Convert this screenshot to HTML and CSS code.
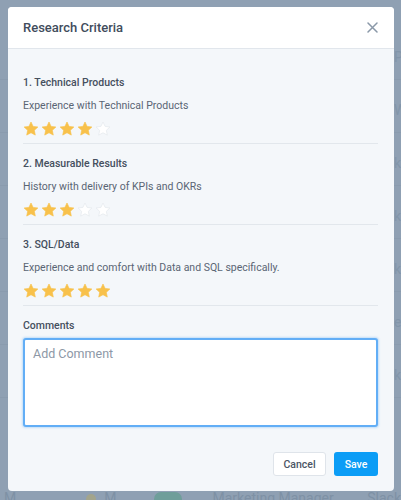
FILE: index.html
```html
<!DOCTYPE html>
<html lang="en">
<head>
    <meta charset="UTF-8">
    <meta name="viewport" content="width=device-width, initial-scale=1.0">
    <title>Research Criteria</title>
    <link rel="stylesheet" href="styles.css">
</head>
<body>

<div class="page-behind">
    <div class="row"><span>Pa</span></div>
    <div class="row"><span>W</span></div>
    <div class="row"><span>kw</span></div>
    <div class="row"><span>kw</span></div>
    <div class="row"><span>kw</span></div>
    <div class="row"><span>e,</span></div>
    <div class="row"><span>kw</span></div>
    <div class="row last">
        <span class="m">M</span>
        <span class="dot"></span>
        <span class="m">M</span>
        <span class="toggle"></span>
        <span class="job">Marketing Manager</span>
        <span class="slack">Slack</span>
    </div>
</div>

<div class="modal">
    <div class="modal-header">
        <h2>Research Criteria</h2>
        <svg class="close" width="11" height="11" viewBox="0 0 11 11">
            <path d="M1 1 L10 10 M10 1 L1 10" stroke="#8a98a8" stroke-width="1.5" stroke-linecap="round"/>
        </svg>
    </div>

    <div class="modal-body">
        <div class="criterion">
            <p class="crit-title">1. Technical Products</p>
            <p class="crit-desc">Experience with Technical Products</p>
            <div class="stars" data-rating="4"></div>
        </div>
        <div class="criterion">
            <p class="crit-title">2. Measurable Results</p>
            <p class="crit-desc">History with delivery of KPIs and OKRs</p>
            <div class="stars" data-rating="3"></div>
        </div>
        <div class="criterion">
            <p class="crit-title">3. SQL/Data</p>
            <p class="crit-desc">Experience and comfort with Data and SQL specifically.</p>
            <div class="stars" data-rating="5"></div>
        </div>

        <p class="crit-title">Comments</p>
        <textarea class="comment" placeholder="Add Comment"></textarea>

        <div class="actions">
            <button class="btn cancel">Cancel</button>
            <button class="btn save">Save</button>
        </div>
    </div>
</div>

<script>
    var star = '<svg width="16" height="16" viewBox="0 0 24 24"><path d="M12 1.5l3.1 6.6 7.2.9-5.3 5 1.4 7.1L12 17.6l-6.4 3.5 1.4-7.1-5.3-5 7.2-.9z"/></svg>';
    document.querySelectorAll(".stars").forEach(function(el) {
        var rating = parseInt(el.dataset.rating);
        var html = "";
        for (var i = 1; i <= 5; i++) {
            html += '<span class="star' + (i <= rating ? ' on' : '') + '">' + star + '</span>';
        }
        el.innerHTML = html;
    });
</script>

</body>
</html>
```

FILE: styles.css
```css
body {
    margin: 0;
    width: 401px;
    height: 500px;
    overflow: hidden;
    position: relative;
    font-family: Roboto, "Liberation Sans", sans-serif;
    background-color: #8fa0b3;
    padding: 7px 7px 0 8px;
    box-sizing: border-box;
}
.page-behind {
    position: absolute;
    top: 0;
    left: 0;
    right: 0;
    color: #8295a9;
    font-size: 14px;
}
.row {
    height: 53px;
    border-bottom: 1px solid #8a9bae;
    display: flex;
    align-items: flex-end;
    justify-content: flex-end;
    padding: 0 0 14px;
    box-sizing: border-box;
}
.row:first-child {
    height: 80px;
}
.row span {
    width: 7px;
    overflow: hidden;
}
.row.last {
    justify-content: flex-start;
    align-items: flex-start;
    padding: 0 0 0 4px;
    height: 30px;
    gap: 8px;
    margin-top: 92px;
    border: none;
    color: #7e91a5;
}
.row.last span {
    width: auto;
}
.row.last .dot {
    width: 10px;
    height: 10px;
    border-radius: 50%;
    background: #a2a48c;
    margin: 4px 0 0 62px;
}
.row.last .toggle {
    width: 28px;
    height: 14px;
    border-radius: 8px;
    background: #6f9e9a;
    margin: 2px 0 0 30px;
}
.row.last .job {
    margin-left: 22px;
}
.row.last .slack {
    margin-left: auto;
}
.modal {
    position: relative;
    width: 386px;
    height: 484px;
    background: #f4f7fa;
    border-radius: 4px;
    overflow: hidden;
    display: flex;
    flex-direction: column;
}
.modal-header {
    height: 41px;
    background: white;
    border-bottom: 1px solid #e1e6ec;
    display: flex;
    align-items: center;
    justify-content: space-between;
    padding: 0 16px 0 15px;
}
.modal-header h2 {
    margin: 0;
    font-size: 13px;
    font-weight: 500;
    color: #414c5c;
}
.close {
    display: block;
}
.modal-body {
    padding: 25px 16px 15px 15px;
    display: flex;
    flex-direction: column;
    flex: 1;
}
.criterion {
    border-bottom: 1px solid #e2e7ec;
    padding-bottom: 6px;
    margin-bottom: 11px;
}
p {
    margin: 0;
    line-height: 18px;
}
.crit-title {
    font-size: 10.5px;
    font-weight: 500;
    color: #454f5e;
}
.crit-desc {
    font-size: 10.5px;
    color: #5a6574;
    margin-top: 5px;
}
.stars {
    display: flex;
    gap: 2px;
    margin-top: 5px;
    height: 17px;
    align-items: center;
}
.star {
    display: block;
    height: 16px;
}
.star svg {
    display: block;
    fill: #ffffff;
    stroke: #e4e8ed;
    stroke-width: 1;
}
.star.on svg {
    fill: #f8c14b;
    stroke: #f8c14b;
}
.comment {
    margin-top: 3px;
    height: 89px;
    box-sizing: border-box;
    border: 2px solid #62aef6;
    box-shadow: 0 0 2px 1px rgba(98, 174, 246, 0.35);
    border-radius: 3px;
    background: white;
    padding: 6px 8px;
    font-family: Roboto, "Liberation Sans", sans-serif;
    font-size: 12.5px;
    resize: none;
    outline: none;
}
.comment::placeholder {
    color: #8d98a6;
}
.actions {
    margin-top: auto;
    display: flex;
    justify-content: flex-end;
    gap: 8px;
}
.btn {
    height: 24px;
    border-radius: 3px;
    font-family: Roboto, "Liberation Sans", sans-serif;
    font-size: 10.5px;
    font-weight: 500;
    padding: 0;
    display: flex;
    align-items: center;
    justify-content: center;
    cursor: pointer;
}
.cancel {
    background: white;
    border: 1px solid #dfe4ea;
    color: #4b5565;
    width: 53px;
}
.save {
    background: #0b9df6;
    border: none;
    color: white;
    width: 44px;
}
```
